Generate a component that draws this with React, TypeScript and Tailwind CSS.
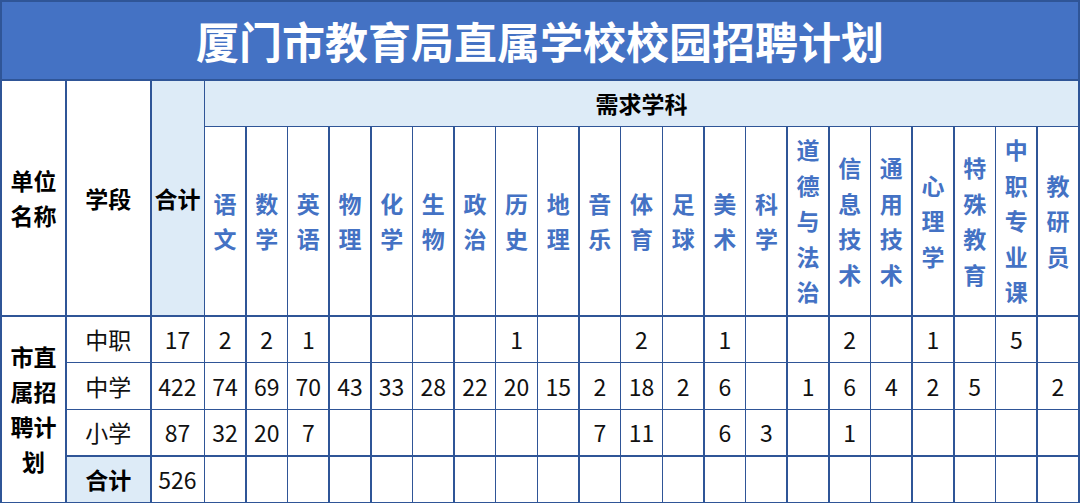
import React from "react";

const subjects = [
  "语文", "数学", "英语", "物理", "化学", "生物", "政治", "历史", "地理", "音乐",
  "体育", "足球", "美术", "科学", "道德与法治", "信息技术", "通用技术", "心理学",
  "特殊教育", "中职专业课", "教研员",
];

type Row = { name: string; total: string; vals: (string | number)[] };

const rows: Row[] = [
  { name: "中职", total: "17", vals: [2, 2, 1, "", "", "", "", 1, "", "", 2, "", 1, "", "", 2, "", 1, "", 5, ""] },
  { name: "中学", total: "422", vals: [74, 69, 70, 43, 33, 28, 22, 20, 15, 2, 18, 2, 6, "", 1, 6, 4, 2, 5, "", 2] },
  { name: "小学", total: "87", vals: [32, 20, 7, "", "", "", "", "", "", 7, 11, "", 6, 3, "", 1, "", "", "", "", ""] },
];

const font = { fontFamily: '"Noto Sans CJK SC", "Noto Sans", sans-serif' };

export default function App() {
  return (
    <div
      className="w-[1080px] h-[503px] bg-[#2f5597] p-[2px] pb-[1px] grid gap-[1.5px] grid-cols-[63px_83.5px_52px_repeat(21,minmax(0,1fr))] grid-rows-[77px_45px_188px_repeat(4,minmax(0,1fr))] overflow-hidden"
      style={font}
    >
      {/* title */}
      <div className="col-span-24 bg-[#4472c4] flex items-center justify-center text-white font-bold text-[43px] leading-none">
        厦门市教育局直属学校校园招聘计划
      </div>

      {/* left headers */}
      <div className="row-span-2 bg-white flex flex-col items-center justify-center font-bold text-[23px] leading-[35px] text-black">
        <div>单位</div>
        <div>名称</div>
      </div>
      <div className="row-span-2 bg-white flex items-center justify-center font-bold text-[23px] text-black">
        学段
      </div>
      <div className="row-span-2 bg-[#ddebf7] flex items-center justify-center font-bold text-[23px] text-black">
        合计
      </div>
      <div className="col-span-21 bg-[#ddebf7] flex items-center justify-center font-bold text-[23px] text-black">
        需求学科
      </div>

      {/* subjects */}
      {subjects.map((s) => (
        <div
          key={s}
          className="bg-white flex flex-col items-center justify-center font-bold text-[23px] leading-[35.5px] text-[#4472c4]"
        >
          {s.split("").map((c, i) => (
            <div key={i}>{c}</div>
          ))}
        </div>
      ))}

      {/* unit name spanning data rows */}
      <div className="row-span-4 bg-white flex flex-col items-center justify-center font-bold text-[23px] leading-[35px] text-black">
        <div>市直</div>
        <div>属招</div>
        <div>聘计</div>
        <div>划</div>
      </div>

      {rows.map((r) => (
        <React.Fragment key={r.name}>
          <div className="bg-white flex items-center justify-center text-[23px] text-[#111]">
            {r.name}
          </div>
          <div className="bg-white flex items-center justify-center text-[23px] text-[#111]">
            {r.total}
          </div>
          {r.vals.map((v, i) => (
            <div key={i} className="bg-white flex items-center justify-center text-[23px] text-[#111]">
              {v}
            </div>
          ))}
        </React.Fragment>
      ))}

      {/* total row */}
      <div className="bg-[#ddebf7] flex items-center justify-center font-bold text-[23px] text-black">
        合计
      </div>
      <div className="bg-white flex items-center justify-center text-[23px] text-[#111]">526</div>
      {subjects.map((s) => (
        <div key={s} className="bg-white" />
      ))}
    </div>
  );
}
